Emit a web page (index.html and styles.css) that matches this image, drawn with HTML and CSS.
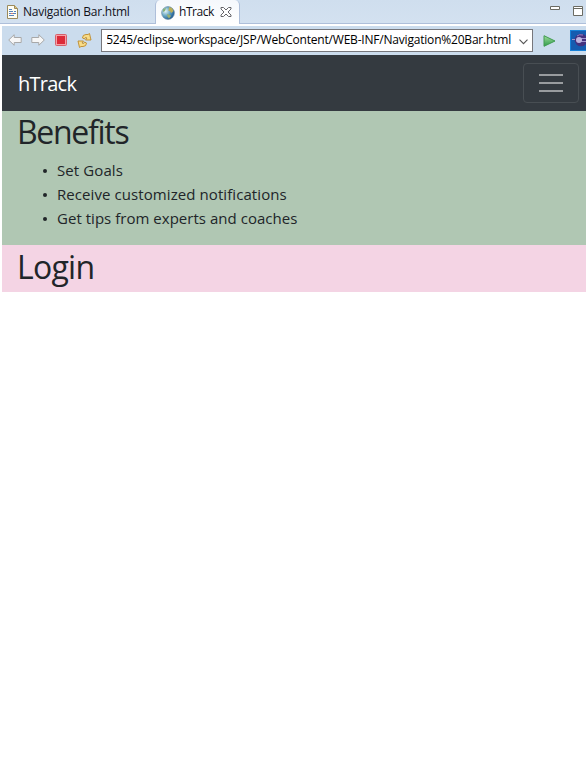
FILE: index.html
```html
<!DOCTYPE html>
<html lang="en">
<head>
<meta charset="utf-8">
<title>hTrack</title>
<link rel="stylesheet" href="styles.css">
</head>
<body>
<header class="tabs">
  <div class="tab">
    <svg class="file-icon" width="12" height="14" viewBox="0 0 12 14"><path d="M.5.5h7l3 3v10H.5z" fill="#fffdf2" stroke="#9b8a5c"/><path d="M7.5.5v3h3" fill="#e3c77d" stroke="#9b8a5c"/><path d="M2 4.5h3M2 6.5h4m1 0h2M2 8.5h3m1 0h3M2 10.5h5" stroke="#5582bd"/><path d="M4 8.5h2" stroke="#d37c78"/></svg>
    <span class="file-name">Navigation Bar.html</span>
  </div>
  <div class="tab active">
    <svg class="globe" width="14" height="14" viewBox="0 0 14 14"><defs><radialGradient id="sea" cx=".3" cy=".35" r=".75"><stop stop-color="#e8f5f7"/><stop offset=".5" stop-color="#65a5c2"/><stop offset="1" stop-color="#17538d"/></radialGradient></defs><circle cx="7" cy="7" r="6.4" fill="url(#sea)" stroke="#6688a0" stroke-width=".6"/><path d="M8 1l3 1 1.500 3-2 2-2-2-1 0z" fill="#b9ae59"/><path d="M6 8l3 1 1 1-2 2.500-1.500-2z" fill="#9caf70"/><path d="M2 3l3-1-1 3-2 1z" fill="#87b27b"/></svg>
    <span class="page-name">hTrack</span>
    <svg class="close" width="12" height="12" viewBox="0 0 12 12"><path d="M1 1.5h2.500L6 4l2.500-2.500H11V3L8 6l3 3v1.500H8.500L6 8l-2.500 2.500H1V9l3-3-3-3z" fill="#fff" stroke="#65656a"/></svg>
  </div>
  <svg class="window-controls" width="34" height="12" viewBox="0 0 34 12"><path d="M.5.5h9v3h-9zM23.500.5h9v9h-9z" fill="#fff" stroke="#6b6b63"/><path d="M23 2.500h10" stroke="#6b6b63"/></svg>
</header>
<div class="toolbar">
  <svg class="arrow" width="14" height="12" viewBox="0 0 14 12"><path d="M.7 6l5.500-5.300V3.500h7v5h-7v2.800z" fill="#f7f7f7" stroke="#a8a8a8" stroke-linejoin="round"/></svg>
  <svg class="arrow forward" width="14" height="12" viewBox="0 0 14 12"><path d="M13.300 6L7.800.7v2.800h-7v5h7v2.800z" fill="#f7f7f7" stroke="#a8a8a8" stroke-linejoin="round"/></svg>
  <svg class="stop" width="12" height="12" viewBox="0 0 12 12"><rect x=".5" y=".5" width="11" height="11" rx="1" fill="#f6a0a6" stroke="#d5606b"/><rect x="2" y="2" width="8" height="8" fill="#dc2a38"/></svg>
  <svg class="refresh" width="15" height="15" viewBox="0 0 15 15"><g fill="#f8dc88" stroke="#bd8a2c" stroke-width=".9" stroke-linejoin="round"><path d="M5.500 5Q5.500 1.500 9 1.500H11L12.500.5 14 7H8.500L10 5Q8 3.500 7.500 6z"/><path d="M9.500 10Q9.500 13.500 6 13.500H4L2.500 14.500 1 8H6.500L5 10Q7 11.500 7.500 9z"/></g></svg>
  <div class="address"><span class="clip"><span class="url">35245/eclipse-workspace/JSP/WebContent/WEB-INF/Navigation%20Bar.html</span></span><svg class="chevron" width="9" height="6" viewBox="0 0 9 6"><path d="M.5.7l4 4 4-4" fill="none" stroke="#555" stroke-width="1.1"/></svg></div>
  <svg class="run" width="13" height="12" viewBox="0 0 13 12"><defs><linearGradient id="go" x2="0" y2="1"><stop stop-color="#a0dc9b"/><stop offset="1" stop-color="#2d9b4a"/></linearGradient></defs><path d="M1 .7L12 6 1 11.300z" fill="url(#go)" stroke="#409b50"/></svg>
  <svg class="browser" width="16" height="21" viewBox="0 0 16 21"><path d="M0 0h16v21H0z" fill="#1681d8"/><path d="M1 1h15v19H1z" fill="#155cb0"/><circle cx="11" cy="10" r="6.300" fill="#44327f"/><path d="M2 9.500h3M7 8.500h9M7 11.500h9" stroke="#9d95d0"/><circle cx="9" cy="10" r="3" fill="#bcb5e1"/><path d="M7 6q2-2 6-1" stroke="#9584c8" fill="none"/></svg>
</div>
<main class="page">
  <nav class="navbar">
    <a class="brand">hTrack</a>
    <button class="menu" aria-label="Toggle navigation"><i></i><i></i><i></i></button>
  </nav>
  <section class="benefits">
    <h1><span class="benefits-title">Benefits</span></h1>
    <ul><li><span class="goals">Set Goals</span></li><li><span class="notifications">Receive customized notifications</span></li><li><span class="tips">Get tips from experts and coaches</span></li></ul>
  </section>
  <section class="login"><h1><span class="login-title">Login</span></h1></section>
</main>
</body>
</html>
```
FILE: styles.css
```css
* { box-sizing: border-box; }
body { margin: 0; background: #fff; color: #212529; font-family: "Open Sans", "Noto Sans", sans-serif; overflow: hidden; }
svg { display: block; flex: none; }
.tabs { display: flex; height: 24px; background: linear-gradient(#cfdeee, #d3e1f0); border-bottom: 1px solid #aebfda; font-size: 12px; line-height: 24px; color: #101018; }
.tab { display: flex; width: 155px; height: 24px; padding-left: 7px; white-space: nowrap; }
.file-icon { margin: 5px 4px 0 0; }
.file-name { letter-spacing: -.24px; }
.active { width: 85px; padding-left: 5px; background: linear-gradient(#f5f8fc, #fff); border: solid #aebfda; border-width: 0 1px; border-radius: 5px 5px 0 0; }
.globe { margin: 6px 4px 0 0; }
.page-name { width: 41px; letter-spacing: -.45px; }
.close { margin-top: 6px; }
.window-controls { margin: 6px 2px 0 auto; }
.toolbar { display: flex; height: 31px; margin-left: 2px; padding-left: 6px; align-items: flex-start; background: #cbdced; border-top: 2px solid #fff; }
.arrow { margin-top: 8px; }
.forward { margin-left: 9px; }
.stop { margin: 8px 0 0 10px; }
.refresh { margin: 7px 0 0 10px; }
.address { display: flex; width: 432px; height: 23px; margin: 3px 0 0 9px; padding-left: 5px; background: #fff; border: 1px solid #77777c; color: #000; }
.clip { display: flex; justify-content: flex-end; width: 404px; overflow: hidden; white-space: nowrap; font-size: 12px; line-height: 20px; }
.url { flex: none; letter-spacing: -.2px; }
.chevron { margin: 9px 0 0 8px; }
.run { margin: 9px 0 0 10px; }
.browser { margin: 4px 0 0 14px; }
.page { margin-left: 2px; }
.navbar { display: flex; align-items: center; justify-content: space-between; height: 56px; padding: 0 7px 0 16px; background: #343a40; }
.brand { color: #fff; font-size: 20px; line-height: 30px; letter-spacing: -.75px; padding-top: 2px; }
.menu { display: flex; flex-direction: column; align-items: center; justify-content: center; gap: 6px; width: 56px; height: 40px; padding: 0; border: 1px solid #484e53; border-radius: 4px; background: transparent; }
.menu i { width: 24px; height: 2px; background: #999c9f; }
.benefits { height: 134px; padding-left: 15px; background: #b0c7b3; }
.login { height: 47px; padding-left: 15px; background: #f4d4e4; }
h1 { height: 47px; margin: 0; font-size: 32px; line-height: 42px; font-weight: 400; }
.benefits-title { letter-spacing: -1.3px; }
.login-title { letter-spacing: -.75px; line-height: 44px; }
ul { margin: 0; padding: 0 0 0 26px; font-size: 15px; line-height: 24px; list-style: none; }
li { display: flex; align-items: center; height: 24px; }
li::before { content: ""; width: 4px; height: 4px; margin: 2px 10px 0 0; border-radius: 50%; background: #212529; }
.goals { letter-spacing: .1px; }
.notifications { letter-spacing: .08px; }
.tips { letter-spacing: .03px; }
```
